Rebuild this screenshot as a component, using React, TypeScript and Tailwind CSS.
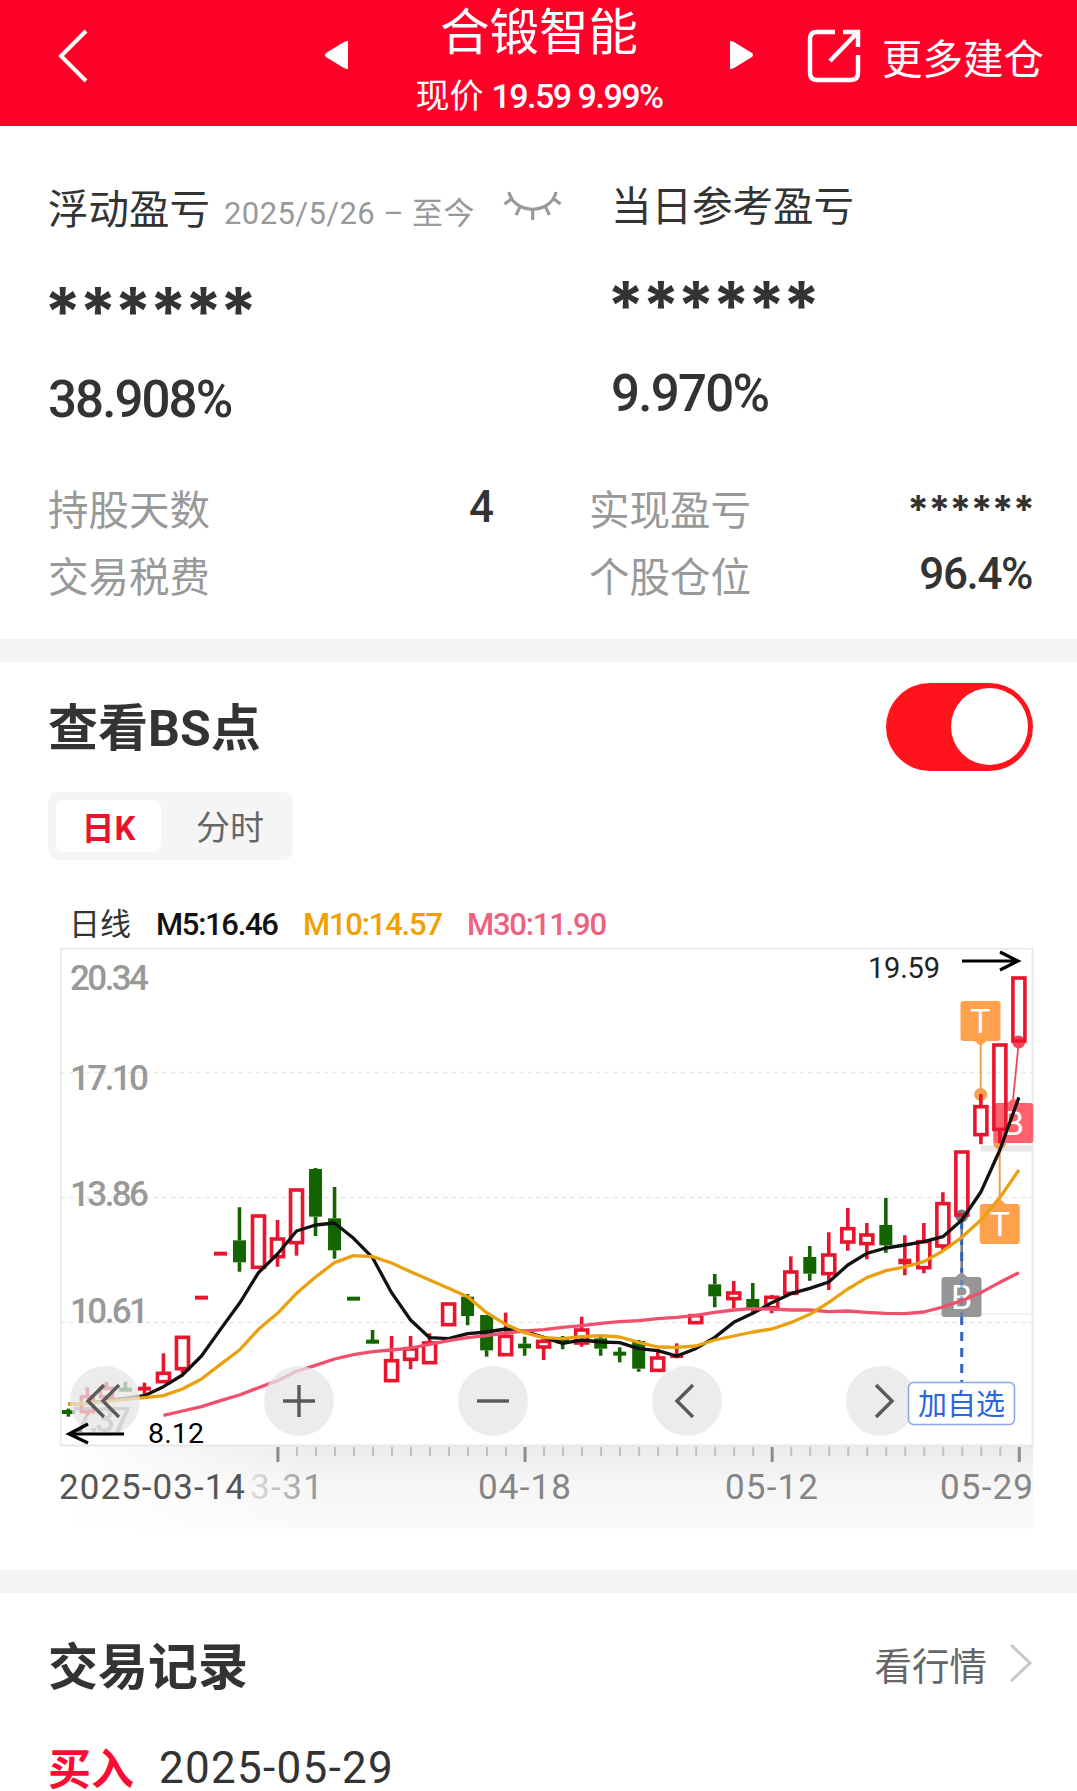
import { useState } from "react";

import clsx from "clsx";

interface CandleProps {
  open: number;
  close: number;
  high: number;
  low: number;
  up: boolean;
  solid?: boolean;
}

interface BadgeProps {
  x: number;
  y: number;
  label: string;
  color: string;
  tip: "up" | "down";
}

const RED = "#e8152e";
const GREEN = "#146400";

// [body top, body bottom, wick top, wick bottom, direction]
const rows: [number, number, number, number, string][] = [
  [846, 846, 836, 860, "g"],
  [800, 845, 772, 856, "r"],
  [775, 800, 755, 812, "r"],
  [779, 779, 755, 783, "g"],
  [776, 776, 758, 793, "r"],
  [730, 755, 670, 755, "r"],
  [622, 716, 622, 730, "r"],
  [503, 503, 503, 503, "r"],
  [371, 371, 371, 371, "r"],
  [331, 397, 232, 425, "g"],
  [258, 412, 258, 412, "r"],
  [327, 380, 270, 410, "r"],
  [180, 338, 180, 377, "r"],
  [117, 260, 114, 318, "g"],
  [265, 361, 171, 386, "g"],
  [506, 506, 506, 506, "g"],
  [635, 635, 600, 640, "g"],
  [692, 752, 618, 752, "r"],
  [657, 688, 618, 718, "r"],
  [639, 698, 610, 698, "r"],
  [522, 584, 522, 584, "r"],
  [500, 558, 492, 586, "g"],
  [555, 661, 555, 680, "g"],
  [619, 674, 548, 674, "r"],
  [641, 655, 620, 677, "g"],
  [634, 651, 620, 690, "r"],
  [625, 640, 618, 658, "g"],
  [600, 639, 560, 650, "r"],
  [625, 656, 620, 677, "g"],
  [671, 671, 652, 697, "g"],
  [633, 716, 630, 725, "g"],
  [684, 721, 665, 721, "r"],
  [678, 678, 640, 685, "r"],
  [557, 578, 557, 578, "r"],
  [463, 499, 432, 532, "g"],
  [489, 506, 453, 535, "r"],
  [507, 538, 459, 545, "g"],
  [502, 533, 495, 550, "r"],
  [426, 490, 379, 490, "r"],
  [381, 431, 348, 452, "g"],
  [375, 431, 307, 480, "r"],
  [296, 336, 234, 362, "r"],
  [315, 341, 279, 388, "r"],
  [285, 346, 204, 368, "g"],
  [386, 403, 316, 436, "s"],
  [335, 413, 279, 430, "r"],
  [221, 348, 187, 360, "r"],
  [66, 255, 66, 255, "r"],
  [-70, 14, -108, 43, "r"],
  [-255, -2, -255, 40, "r"],
  [-456, -267, -456, -267, "r"],
];

const candles: CandleProps[] = rows.map(([open, close, high, low, kind]) => ({
  open,
  close,
  high,
  low,
  up: kind !== "g",
  solid: kind !== "r",
}));

const ma5 = [
  822, 820, 812, 805, 797, 770, 735, 678, 598, 520, 428, 372, 303, 285, 279, 325,
  383, 488, 570, 623, 626, 611, 606, 597, 604, 622, 640, 630, 636, 638, 656, 662,
  678, 656, 622, 577, 550, 518, 491, 475, 456, 405, 370, 354, 345, 335, 320, 270,
  186, 60, -98,
];
const ma10 = [
  822, 820, 814, 808, 803, 797, 777, 747, 703, 660, 598, 550, 490, 441, 398, 377,
  380, 399, 425, 450, 475, 500, 548, 583, 608, 623, 626, 620, 617, 621, 637, 651,
  652, 648, 630, 618, 606, 597, 578, 553, 517, 477, 443, 422, 411, 395, 363, 322,
  270, 203, 120,
];
const ma30 = [
  856, 843, 830, 812, 795, 773, 752, 724, 706, 687, 674, 665, 660, 654, 643, 632,
  623, 617, 609, 603, 599, 592, 587, 580, 575, 572, 566, 562, 556, 547, 540, 536,
  537, 540, 540, 545, 543, 547, 550, 551, 546, 531, 512, 488, 457, 428,
];

const xAt = (index: number) => 8.4 + index * 19.01;
const yAt = (value: number) => 182 + value / 3;

function toPoints(values: number[], start = 0) {
  return values.map((v, i) => `${xAt(i + start)},${yAt(v)}`).join(" ");
}

function Candle({ candle, index }: { candle: CandleProps; index: number }) {
  const x = xAt(index);
  const top = yAt(candle.open);
  const bottom = yAt(candle.close);
  const color = candle.up ? RED : GREEN;

  if (candle.open === candle.close) {
    return (
      <g stroke={color}>
        <path d={`M${x - 6.5} ${top}h13`} strokeWidth="4" />
        <path d={`M${x} ${yAt(candle.high)}V${yAt(candle.low)}`} strokeWidth="3.6" />
      </g>
    );
  }

  return (
    <g stroke={color}>
      <path
        d={`M${x} ${yAt(candle.high)}V${top}M${x} ${bottom}V${yAt(candle.low)}`}
        strokeWidth="3.6"
      />
      {candle.solid ? (
        <rect x={x - 6.5} y={top} width="13" height={bottom - top} fill={color} stroke="none" />
      ) : (
        <rect x={x - 6} y={top} width="12" height={bottom - top} fill="none" strokeWidth="3.6" />
      )}
    </g>
  );
}

function Badge({ x, y, label, color, tip }: BadgeProps) {
  const tipPath =
    tip === "up"
      ? `M${x + 14} ${y}l6 -5l6 5z`
      : `M${x + 14} ${y + 40}l6 5l6 -5z`;

  return (
    <g>
      <rect x={x} y={y} width="40" height="40" rx="3" fill={color} />
      <path d={tipPath} fill={color} />
      <text x={x + 20} y={y + 32} textAnchor="middle" fontSize="34" fill="#fff">
        {label}
      </text>
    </g>
  );
}

const scale = [
  { label: "20.34", y: 42 },
  { label: "17.10", y: 142 },
  { label: "13.86", y: 258 },
  { label: "10.61", y: 375 },
];

const controls = [
  { x: 45, d: "M-1 -16l-16 16l16 16M14 -16l-16 16l16 16" },
  { x: 239, d: "M-16 0h32M0 -16v32" },
  { x: 433, d: "M-16 0h32" },
  { x: 627, d: "M6 -16l-16 16l16 16" },
  { x: 821, d: "M-5 -16l16 16l-16 16" },
];

function Chart() {
  return (
    <svg
      width="975"
      height="582"
      viewBox="0 0 975 582"
      className="block font-[Roboto,'Noto_Sans_CJK_SC',sans-serif]"
    >
      <defs>
        <linearGradient id="axis" x1="0" y1="0" x2="0" y2="1">
          <stop offset="0" stopColor="#ebebeb" />
          <stop offset="0.45" stopColor="#f6f6f6" />
          <stop offset="1" stopColor="#fafafa" />
        </linearGradient>
        <linearGradient id="fade" x1="0" y1="0" x2="1" y2="0">
          <stop offset="0" stopColor="#fff" />
          <stop offset="1" stopColor="#fff" stopOpacity="0" />
        </linearGradient>
        <linearGradient id="dateFade" gradientUnits="userSpaceOnUse" x1="180" y1="0" x2="265" y2="0">
          <stop offset="0" stopColor="#ededed" />
          <stop offset="1" stopColor="#8c8c8c" />
        </linearGradient>
      </defs>

      <rect x="0" y="497" width="973" height="84" fill="url(#axis)" />
      <rect x="0" y="498" width="260" height="84" fill="url(#fade)" />
      <rect x="0.5" y="0.5" width="972" height="497" fill="none" stroke="#e8e8e8" strokeWidth="2" />
      <path d="M0 124.5H973M0 249.5H973M0 374.5H973" stroke="#e8e8e8" strokeWidth="1.5" strokeDasharray="5 3.5" />
      <path d="M800 366H973M960 95H973" stroke="#eeeeee" strokeWidth="1.5" />
      <path d="M921 200.5H973" stroke="#e8e8e8" strokeWidth="6" />

      <g fontSize="35" fill="#999" fontWeight="500">
        {scale.map((item) => (
          <text key={item.label} x="10" y={item.y} textLength="79">
            {item.label}
          </text>
        ))}
        <text x="13" y="484" textLength="58">
          7.37
        </text>
      </g>

      <g fill="#ffa04d" stroke="#f0a050" strokeWidth="2">
        <path d="M920.7 146V90M939.7 194V258" />
        <circle cx="920.7" cy="146.5" r="5.5" />
        <circle cx="939.7" cy="195" r="5.5" />
      </g>
      <circle cx="958.7" cy="94" r="6.5" fill="#f0455a" />
      <path d="M958.7 95L953 152" stroke="#e84a5c" strokeWidth="1.8" />
      <circle cx="901.7" cy="268" r="6.5" fill="#777" />
      <path d="M901.7 268V330" stroke="#777" strokeWidth="2.5" />
      <path d="M901.7 272V434" stroke="#2c63c8" strokeWidth="3" strokeDasharray="9 7" />

      <Badge x={900.5} y={53} label="T" color="#ffa04d" tip="down" />
      <Badge x={919.8} y={256} label="T" color="#ffa04d" tip="up" />
      <Badge x={933.3} y={155} label="B" color="#ff626c" tip="up" />
      <Badge x={881.5} y={329} label="B" color="#969696" tip="up" />
      <path d="M901.7 332V369" stroke="#2c63c8" strokeWidth="3" strokeDasharray="9 7" opacity="0.4" />

      {candles.map((candle, index) => (
        <Candle key={index} candle={candle} index={index} />
      ))}

      <g fill="none" strokeWidth="3.3" strokeLinejoin="round">
        <polyline points={toPoints(ma5)} stroke="#111" />
        <polyline points={toPoints(ma30, 5)} stroke="#f0506e" />
        <polyline points={toPoints(ma10)} stroke="#eba00f" />
      </g>

      {controls.map((control) => (
        <g key={control.x} transform={`translate(${control.x} 453)`}>
          <circle r="35" fill="#e6e6e6" fillOpacity="0.75" />
          <path d={control.d} fill="none" stroke="#5a5a5a" strokeWidth="3.4" />
        </g>
      ))}

      <rect x="848.5" y="434.5" width="106" height="42" rx="5" fill="#fff" stroke="#86a8e8" strokeWidth="1.5" />
      <text x="901.5" y="466.5" textAnchor="middle" fontSize="29" fill="#2b65dc">
        加自选
      </text>

      <g stroke="#000" strokeWidth="3.2" fill="none">
        <path d="M64 486H9M28 476L9 486L28 495" />
        <path d="M902 13H958M940 4L958 13L940 22" />
      </g>
      <text x="88" y="494.5" fontSize="28.5" fill="#000" textLength="56">
        8.12
      </text>
      <text x="808" y="30" fontSize="29" fill="#222" textLength="72">
        19.59
      </text>

      <g>
        {candles.map((_, index) => {
          if (index < 11) {
            return null;
          }
          const major = (index - 11) % 13 === 0;
          return (
            <path
              key={index}
              d={`M${xAt(index) + 0.4} 499v${major ? 15 : 9}`}
              stroke={major ? "#8c8c8c" : "#c0c0c0"}
              strokeWidth={major ? 3 : 2}
            />
          );
        })}
      </g>
      <g fontSize="35" fill="#858585">
        <text x="-1" y="551" fill="#555" textLength="186">
          2025-03-14
        </text>
        <text x="190" y="551" fill="url(#dateFade)" textLength="73">
          3-31
        </text>
        <text x="418" y="551" textLength="93">
          04-18
        </text>
        <text x="665" y="551" textLength="93">
          05-12
        </text>
        <text x="880" y="551" textLength="93">
          05-29
        </text>
      </g>
    </svg>
  );
}

function Header() {
  return (
    <header className="flex h-[126px] items-center bg-[#ff0029] text-white">
      <button className="ml-[57px] mt-[-14px] w-[32px]">
        <svg width="32" height="54" viewBox="0 0 32 54" fill="none">
          <path d="M29 2L4 27L29 52" stroke="#fff" strokeWidth="4" />
        </svg>
      </button>
      <svg className="ml-[235px] mt-[-16px]" width="25" height="30" viewBox="0 0 25 30">
        <path d="M24 1V29Q22 29 20 28L2 17Q0 15 2 13L20 2Q22 1 24 1Z" fill="#fff" />
      </svg>
      <div className="flex w-[380px] flex-col items-center">
        <h1 className="mt-[-4px] text-[49.5px] leading-[60px]">合锻智能</h1>
        <p className="mt-[9px] flex items-baseline text-[34px] font-medium leading-[48px]">
          <span className="font-normal">现价</span>
          <span className="ml-[8px] tracking-[-1.5px]">19.59 9.99%</span>
        </p>
      </div>
      <svg className="mt-[-16px]" width="25" height="30" viewBox="0 0 25 30">
        <path d="M1 1V29Q3 29 5 28L23 17Q25 15 23 13L5 2Q3 1 1 1Z" fill="#fff" />
      </svg>
      <svg className="ml-[52px] mt-[-14px]" width="58" height="58" viewBox="0 0 58 58" fill="none">
        <g stroke="#fff" strokeWidth="4.4">
          <path d="M29 5H11Q4 5 4 12V46Q4 53 11 53H45Q52 53 52 46V28" />
          <path d="M37 5H52V20M52 5L24 34" />
        </g>
      </svg>
      <span className="ml-[18px] mt-[-6px] text-[40.5px]">更多建仓</span>
    </header>
  );
}

function ClosedEye() {
  return (
    <svg width="60" height="32" viewBox="0 0 60 32" fill="none">
      <g stroke="#999" strokeWidth="3.2">
        <path d="M6 1C11 24 48 24 53 1" />
        <path d="M8.5 8L1.5 13M51 8L57.5 13M17 16L13 24M42.5 16L46.5 24M29.7 18V29" />
      </g>
    </svg>
  );
}

function Stars({ small }: { small?: boolean }) {
  return (
    <span
      className={clsx(
        "block h-[48px] font-[Inter,sans-serif] font-bold text-[#333]",
        small
          ? "mr-[-2px] text-[39px] leading-[64px] tracking-[-0.7px]"
          : "ml-[-4px] text-[67px] leading-[72px] tracking-[-2.3px]"
      )}
    >
      ******
    </span>
  );
}

function Overview() {
  return (
    <section className="flex h-[513px] flex-col">
      <div className="flex h-[320px]">
        <div className="w-[611px] pl-[48px]">
          <div className="mt-[54px] flex h-[60px] items-center">
            <span className="text-[40.5px] text-[#333]">浮动盈亏</span>
            <span className="ml-[14px] mt-[8px] text-[31px] tracking-[0.4px] text-[#999]">
              2025/5/26 – 至今
            </span>
            <div className="ml-[28px] mt-[-6px]">
              <ClosedEye />
            </div>
          </div>
          <div className="mt-[36px]">
            <Stars />
          </div>
          <p className="mt-[46px] text-[51px] font-medium leading-[60px] tracking-[-1.9px] text-[#333]">
            38.908%
          </p>
        </div>
        <div>
          <div className="mt-[51px] flex h-[60px] items-center">
            <span className="text-[40.5px] text-[#333]">当日参考盈亏</span>
          </div>
          <div className="mt-[33px]">
            <Stars />
          </div>
          <p className="mt-[46px] text-[51px] font-medium leading-[60px] tracking-[-1.7px] text-[#333]">
            9.970%
          </p>
        </div>
      </div>
      <div className="mt-[32px] grid grid-cols-[446px_443px] gap-x-[95px] pl-[48px] text-[40.5px] leading-[67px] text-[#999]">
        <div className="flex h-[67px] justify-between">
          <span>持股天数</span>
          <span className="mt-[-4px] text-[44px] font-medium text-[#333]">4</span>
        </div>
        <div className="flex h-[67px] justify-between">
          <span>实现盈亏</span>
          <Stars small />
        </div>
        <div className="flex h-[67px] justify-between">
          <span>交易税费</span>
        </div>
        <div className="flex h-[67px] justify-between">
          <span>个股仓位</span>
          <span className="mt-[-4px] text-[44px] font-medium tracking-[-1.4px] text-[#333]">96.4%</span>
        </div>
      </div>
    </section>
  );
}

function BsPoints() {
  const [checked, setChecked] = useState(true);

  return (
    <section className="flex h-[908px] flex-col">
      <div className="mt-[20px] flex h-[89px] items-center justify-between pl-[48px] pr-[44px]">
        <h2 className="mt-[6px] text-[50px] font-bold text-[#333]">查看BS点</h2>
        <button
          onClick={() => setChecked(!checked)}
          className={clsx(
            "flex h-[88px] w-[147px] items-center rounded-full px-[5px]",
            checked ? "justify-end bg-[#ff141e]" : "justify-start bg-gray-300"
          )}
        >
          <span className="h-[77px] w-[77px] rounded-full bg-white"></span>
        </button>
      </div>
      <div className="ml-[48px] mt-[21px] flex h-[68px] w-[245px] items-center rounded-[10px] bg-[#f5f5f5] pl-[8px] text-[34px]">
        <span className="flex h-[52px] w-[105px] items-center justify-center rounded-[8px] bg-white pt-[5px] text-[33px] font-bold text-[#e6142d]">
          日K
        </span>
        <span className="ml-[35px] mt-[4px] text-[#666]">分时</span>
      </div>
      <div className="ml-[69px] mt-[43px] flex h-[45px] items-center text-[31px]">
        <span className="w-[87px] text-[#333]">日线</span>
        <span className="w-[147px] font-medium tracking-[-1.3px] text-[#111]">M5:16.46</span>
        <span className="w-[164px] font-medium tracking-[-1.2px] text-[#f0a000]">M10:14.57</span>
        <span className="font-medium tracking-[-1.2px] text-[#f0607f]">M30:11.90</span>
      </div>
      <div className="ml-[60px]">
        <Chart />
      </div>
    </section>
  );
}

function Records() {
  return (
    <section className="flex flex-col pl-[48px] pr-[44px]">
      <div className="mt-[38px] flex h-[74px] items-center justify-between">
        <h2 className="text-[50px] font-bold text-[#333]">交易记录</h2>
        <div className="mt-[-2px] flex items-center text-[37.5px] text-[#666]">
          看行情
          <svg className="ml-[22px] mt-[-8px]" width="24" height="40" viewBox="0 0 24 40" fill="none">
            <path d="M2 2L21 20L2 38" stroke="#c8c8c8" strokeWidth="3" />
          </svg>
        </div>
      </div>
      <div className="mt-[44px] flex items-start leading-none">
        <span className="text-[43px] font-bold text-[#ff0a35]">买入</span>
        <span className="ml-[25px] mt-[-3px] text-[44px] tracking-[1.3px] text-[#333]">2025-05-29</span>
      </div>
    </section>
  );
}

export default function App() {
  return (
    <main className="h-[1791px] w-[1077px] overflow-hidden bg-white font-[Roboto,'Noto_Sans_CJK_SC',sans-serif]">
      <Header />
      <Overview />
      <div className="h-[23px] bg-[#f4f4f4]"></div>
      <BsPoints />
      <div className="h-[23px] bg-[#f4f4f4]"></div>
      <Records />
    </main>
  );
}
